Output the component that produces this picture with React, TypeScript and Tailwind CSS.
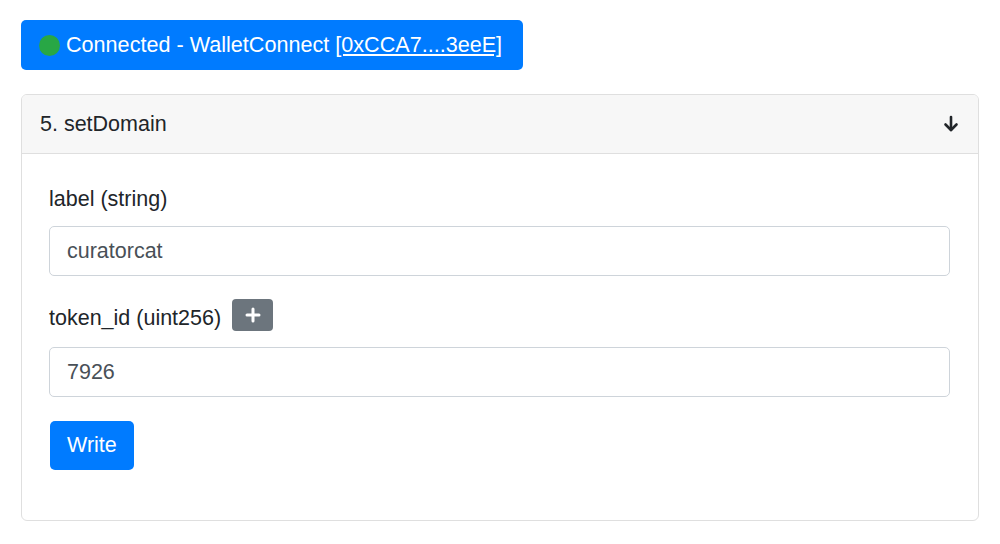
import { useState } from "react"

const font = { fontFamily: '"Liberation Sans", Arial, sans-serif' }

const App = () => {
  const [label, setLabel] = useState("curatorcat")
  const [tokenId, setTokenId] = useState("7926")

  return (
    <div className="min-h-screen bg-white px-[21px] pt-[20px] text-[#212529]" style={font}>
      {/* connection status */}
      <button className="flex h-[50px] items-center rounded-[5px] bg-[#007bff] pl-[18px] pr-[21px] text-[21.6px] text-white">
        <span className="mr-[6px] inline-block h-[21px] w-[21px] rounded-full bg-[#28a745]" />
        <span>
          Connected - WalletConnect <span className="underline underline-offset-2">[0xCCA7....3eeE]</span>
        </span>
      </button>

      {/* card */}
      <div className="mt-[24px] overflow-hidden rounded-[6px] border border-[#dfdfdf]">
        <div className="flex h-[59px] items-center justify-between border-b border-[#dfdfdf] bg-[#f7f7f7] pl-[18px] pr-[19px]">
          <span className="text-[21.5px]">5. setDomain</span>
          <svg width="16" height="18" viewBox="0 0 16 18" fill="none" stroke="#212529" strokeWidth="2.6" strokeLinecap="round" strokeLinejoin="round">
            <path d="M8 2v13" />
            <path d="M2.5 9.5L8 15l5.5-5.5" />
          </svg>
        </div>

        <div className="px-[27px] pt-[30px] pb-[50px]">
          <div className="mb-[12px] text-[21.5px] leading-[30px]">label (string)</div>
          <input
            value={label}
            onChange={(e) => setLabel(e.target.value)}
            className="block h-[50px] w-[901px] rounded-[5px] border border-[#ced4da] px-[17px] text-[21.5px] text-[#495057] outline-none"
          />

          <div className="mt-[23px] mb-[16px] flex h-[32px] items-center">
            <span className="mt-[5px] text-[21.5px] leading-[30px]">token_id (uint256)</span>
            <button className="ml-[11px] flex h-[32px] w-[41px] items-center justify-center rounded-[4px] bg-[#6c757d]">
              <svg width="16" height="16" viewBox="0 0 16 16" stroke="white" strokeWidth="3" strokeLinecap="round">
                <path d="M8 2v12M2 8h12" />
              </svg>
            </button>
          </div>
          <input
            value={tokenId}
            onChange={(e) => setTokenId(e.target.value)}
            className="block h-[50px] w-[901px] rounded-[5px] border border-[#ced4da] px-[17px] text-[21.5px] text-[#495057] outline-none"
          />

          <button className="mt-[24px] ml-[1px] h-[49px] rounded-[5px] bg-[#007bff] px-[17px] text-[21.5px] text-white">
            Write
          </button>
        </div>
      </div>
    </div>
  )
}

export default App
